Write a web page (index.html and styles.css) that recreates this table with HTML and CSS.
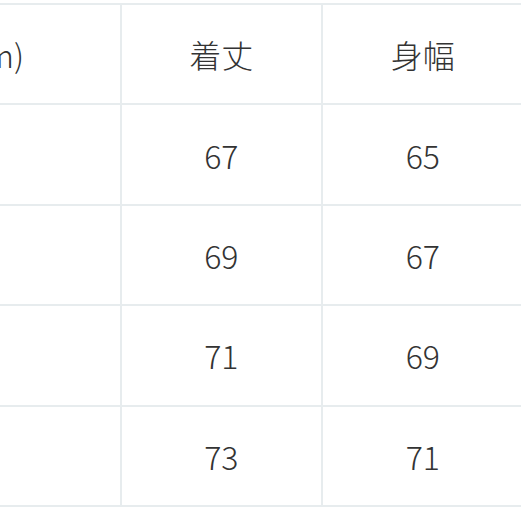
FILE: index.html
```html
<!DOCTYPE html>
<html lang="ja">
<head>
<meta charset="utf-8">
<title>サイズ表</title>
<link rel="stylesheet" href="styles.css">
</head>
<body>
<div class="size-table">
  <div class="cell">サイズ(cm)</div>
  <div class="cell">着丈</div>
  <div class="cell">身幅</div>

  <div class="cell">S</div>
  <div class="cell">67</div>
  <div class="cell">65</div>

  <div class="cell">M</div>
  <div class="cell">69</div>
  <div class="cell">67</div>

  <div class="cell">L</div>
  <div class="cell">71</div>
  <div class="cell">69</div>

  <div class="cell">XL</div>
  <div class="cell">73</div>
  <div class="cell">71</div>
</div>
</body>
</html>
```

FILE: styles.css
```css
html, body {
  margin: 0;
  padding: 0;
  background: #ffffff;
  overflow: hidden;
}

.size-table {
  display: grid;
  grid-template-columns: 351px 199.5px 199.5px;
  grid-auto-rows: 98.4px;
  gap: 2px;
  padding: 2px;
  background: #e7ecee;
  margin-top: 3px;
  margin-left: -233.5px;
  width: max-content;
  font-family: "Noto Sans CJK JP", "Noto Sans", sans-serif;
  font-size: 32px;
  font-weight: 300;
  color: #333333;
}

.cell {
  background: #ffffff;
  display: flex;
  align-items: center;
  justify-content: center;
  line-height: 1;
}
```
